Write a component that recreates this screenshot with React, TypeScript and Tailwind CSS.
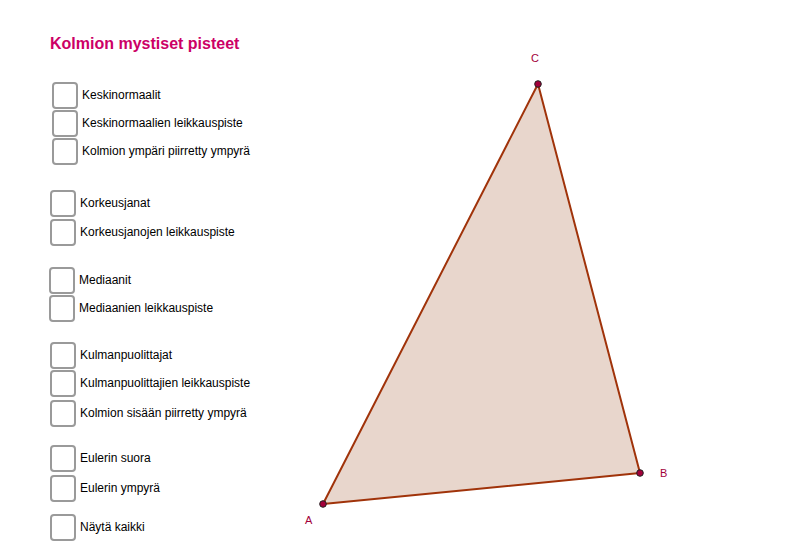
import React from "react";

type Row = { label: string; mt: string; ml: string };

const rows: Row[] = [
  { label: "Keskinormaalit", mt: "mt-[27px]", ml: "ml-[2px]" },
  { label: "Keskinormaalien leikkauspiste", mt: "mt-0", ml: "ml-[2px]" },
  { label: "Kolmion ympäri piirretty ympyrä", mt: "mt-0", ml: "ml-[2px]" },
  { label: "Korkeusjanat", mt: "mt-[24px]", ml: "ml-0" },
  { label: "Korkeusjanojen leikkauspiste", mt: "mt-[1px]", ml: "ml-0" },
  { label: "Mediaanit", mt: "mt-[20px]", ml: "-ml-[1px]" },
  { label: "Mediaanien leikkauspiste", mt: "mt-0", ml: "-ml-[1px]" },
  { label: "Kulmanpuolittajat", mt: "mt-[19px]", ml: "ml-0" },
  { label: "Kulmanpuolittajien leikkauspiste", mt: "mt-0", ml: "ml-0" },
  { label: "Kolmion sisään piirretty ympyrä", mt: "mt-[2px]", ml: "ml-0" },
  { label: "Eulerin suora", mt: "mt-[17px]", ml: "ml-0" },
  { label: "Eulerin ympyrä", mt: "mt-[2px]", ml: "ml-0" },
  { label: "Näytä kaikki", mt: "mt-[11px]", ml: "ml-0" },
];

function CheckRow({ row }: { row: Row }) {
  return (
    <label className={`flex h-[28px] items-center gap-[4px] ${row.mt} ${row.ml}`}>
      <span className="h-[27px] w-[26px] shrink-0 rounded-[4px] border-2 border-[#9a9a9a] bg-white" />
      <span className="text-[12px] text-black">{row.label}</span>
    </label>
  );
}

export default function App() {
  const A = { x: 323, y: 504 };
  const B = { x: 640, y: 473 };
  const C = { x: 538, y: 84 };

  return (
    <div className="flex h-[556px] w-[793px] overflow-hidden bg-white font-['Liberation_Sans',Arial,sans-serif]">
      <div className="w-[290px] shrink-0 pl-[50px] pt-[34px]">
        <h1 className="h-[20px] text-[16px] leading-[20px] font-bold text-[#cc0066]">
          Kolmion mystiset pisteet
        </h1>
        {rows.map((r) => (
          <CheckRow key={r.label} row={r} />
        ))}
      </div>

      <svg width={503} height={556} viewBox="290 0 503 556" className="shrink-0">
        <polygon
          points={`${A.x},${A.y} ${B.x},${B.y} ${C.x},${C.y}`}
          fill="#e8d6cc"
          stroke="#a0330a"
          strokeWidth={2}
          strokeLinejoin="round"
        />
        {[A, B, C].map((p, i) => (
          <circle key={i} cx={p.x} cy={p.y} r={3.3} fill="#a3003a" stroke="#222" strokeWidth={1} />
        ))}
        <g fill="#a3003a" fontSize={11} fontFamily="Liberation Sans, Arial, sans-serif">
          <text x={531} y={62}>C</text>
          <text x={305} y={524}>A</text>
          <text x={660} y={477}>B</text>
        </g>
      </svg>
    </div>
  );
}
